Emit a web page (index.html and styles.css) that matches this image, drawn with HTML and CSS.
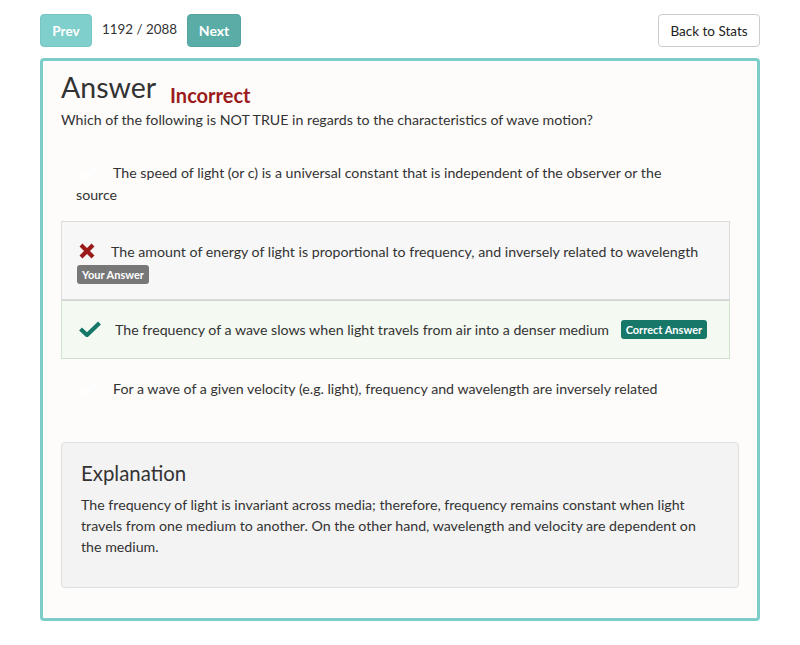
FILE: index.html
```html
<!DOCTYPE html>
<html>
<head>
<meta charset="utf-8">
<link rel="stylesheet" href="styles.css">
</head>
<body>
<div class="topbar">
  <div class="pager">
    <button class="btn btn-prev">Prev</button>
    <span class="count">1192 / 2088</span>
    <button class="btn btn-next">Next</button>
  </div>
  <button class="btn btn-back">Back to Stats</button>
</div>
<div class="card">
  <div class="title-row">
    <h1 class="title">Answer</h1>
    <span class="status">Incorrect</span>
  </div>
  <p class="question">Which of the following is NOT TRUE in regards to the characteristics of wave motion?</p>
  <div class="options">
    <div class="option option-first">
      <svg class="icon icon-blank" viewBox="0 0 20 16"><path d="M1 8.5 L7 14 L19 2" fill="none" stroke="#fefefe" stroke-width="4"/></svg>The speed of light (or c) is a universal constant that is independent of the observer or the source
    </div>
    <div class="option option-wrong">
      <svg class="icon icon-x" viewBox="0 0 16 16"><path d="M2 2 L14 14 M14 2 L2 14" stroke="#9b1b1b" stroke-width="4.2" stroke-linecap="butt"/></svg>The amount of energy of light is proportional to frequency, and inversely related to wavelength
      <div><span class="badge badge-gray">Your Answer</span></div>
    </div>
    <div class="option option-right">
      <svg class="icon icon-check" viewBox="0 0 22 16"><path d="M1.5 8 L8 14 L20.5 2" fill="none" stroke="#17786a" stroke-width="4.2"/></svg>The frequency of a wave slows when light travels from air into a denser medium <span class="badge badge-green">Correct Answer</span>
    </div>
    <div class="option">
      <svg class="icon icon-blank" viewBox="0 0 20 16"><path d="M1 8.5 L7 14 L19 2" fill="none" stroke="#fefefe" stroke-width="4"/></svg>For a wave of a given velocity (e.g. light), frequency and wavelength are inversely related
    </div>
  </div>
  <div class="explanation">
    <h2 class="exp-title">Explanation</h2>
    <p class="exp-text">The frequency of light is invariant across media; therefore, frequency remains constant when light travels from one medium to another. On the other hand, wavelength and velocity are dependent on the medium.</p>
  </div>
</div>
</body>
</html>
```

FILE: styles.css
```css
* { box-sizing: border-box; }
body {
  margin: 0;
  background: #fff;
  font-family: "Lato", "Open Sans", sans-serif;
  color: #333;
  font-size: 14.2px;
}
.topbar {
  display: flex;
  justify-content: space-between;
  align-items: center;
  padding: 14px 40px 0 40px;
}
.pager {
  display: flex;
  align-items: center;
}
.btn {
  font-family: inherit;
  height: 33px;
  border-radius: 4px;
  font-size: 13.5px;
  cursor: pointer;
}
.btn-prev, .btn-next {
  color: #fff;
  font-weight: bold;
  border: 1px solid transparent;
  padding: 0;
}
.btn-prev {
  width: 52px;
  background: #7fcfcc;
  border-color: #77c6c3;
}
.btn-next {
  width: 54px;
  font-size: 14px;
  background: #5aaca7;
  border-color: #54a39e;
}
.count {
  font-size: 13.4px;
  color: #333;
  margin: 0 10px;
  position: relative;
  top: -2px;
}
.btn-back {
  width: 102px;
  background: #fff;
  color: #222;
  border: 1px solid #ccc;
}
.card {
  margin: 11px 40px 0 40px;
  border: 3px solid #7ccdca;
  border-radius: 4px;
  background: #fdfcfa;
  padding: 6px 18px 30px 18px;
}
.title-row {
  display: flex;
  align-items: baseline;
}
.title {
  margin: 0;
  font-size: 28.5px;
  font-weight: normal;
  color: #333;
  line-height: 40px;
}
.status {
  margin-left: 14px;
  color: #9b1b1b;
  font-weight: bold;
  font-size: 20px;
  position: relative;
  top: 5px;
}
.question {
  margin: 2px 0 10px 0;
  font-size: 14.2px;
  line-height: 22px;
}
.options {
  margin-right: 9px;
}
.option {
  border: 1px solid transparent;
  padding: 18px 14px 18px 14px;
  line-height: 22px;
  font-size: 14.2px;
}
.option-first {
  padding-top: 20px;
  padding-bottom: 14px;
  padding-right: 30px;
}
.icon {
  display: inline-block;
  vertical-align: -2px;
  margin-right: 14px;
}
.icon-blank { width: 22px; height: 16px; margin-left: 1px; }
.icon-x { width: 16px; height: 16px; margin-left: 2px; margin-right: 16px; }
.icon-check { width: 22px; height: 16px; margin-left: 2px; }
.option-wrong {
  background: #f7f7f7;
  border-color: #dcdcdc;
  padding: 19px 15px 14px 15px;
}
.option-right {
  background: #f4f9f2;
  border-color: #cfe3cc;
  border-top-color: #d4d4d4;
  padding: 18px 15px 17px 15px;
}
.badge {
  display: inline-block;
  color: #fff;
  font-size: 11px;
  font-weight: bold;
  line-height: 19px;
  padding: 0 5px;
  border-radius: 3px;
}
.badge-gray { background: #777; }
.badge-green { background: #17786a; margin-left: 8px; vertical-align: 1px; }
.explanation {
  margin-top: 23px;
  background: #f3f3f3;
  border: 1px solid #e0e0e0;
  border-radius: 4px;
  padding: 16px 19px 30px 19px;
}
.exp-title {
  margin: 0 0 7px 0;
  font-size: 20.4px;
  font-weight: normal;
  line-height: 28px;
  color: #333;
}
.exp-text {
  margin: 0;
  font-size: 14.2px;
  line-height: 21px;
}
```
